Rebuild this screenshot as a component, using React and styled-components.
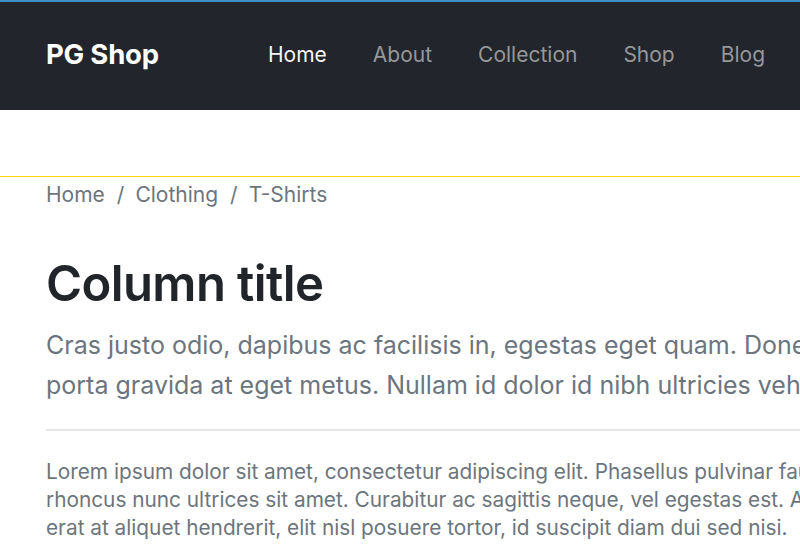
import styled, { createGlobalStyle } from 'styled-components';

const GlobalStyle = createGlobalStyle`
  * {
    box-sizing: border-box;
  }
  body {
    margin: 0;
    overflow: hidden;
    background: #ffffff;
    font-family: Inter, "Noto Sans", "Liberation Sans", sans-serif;
    -webkit-font-smoothing: antialiased;
  }
`;

const navLinks = ['Home', 'About', 'Collection', 'Shop', 'Blog'];
const crumbs = ['Home', 'Clothing', 'T-Shirts'];

const App = () => {
  return (
    <>
      <GlobalStyle />
      <Page>
        <NavBar>
          <Brand>PG Shop</Brand>
          <NavList>
            {navLinks.map((link, i) => (
              <NavLink key={link} $active={i === 0}>
                {link}
              </NavLink>
            ))}
          </NavList>
        </NavBar>
        <Main>
          <Breadcrumb>
            {crumbs.map((c, i) => (
              <Crumb key={c}>
                {i > 0 && <Divider>/</Divider>}
                {c}
              </Crumb>
            ))}
          </Breadcrumb>
          <Content>
            <Title>Column title</Title>
            <Lead>
              Cras justo odio, dapibus ac facilisis in, egestas eget quam. Donec id elit non mi
              porta gravida at eget metus. Nullam id dolor id nibh ultricies vehicula ut id elit.
            </Lead>
            <Rule />
            <Body>
              Lorem ipsum dolor sit amet, consectetur adipiscing elit. Phasellus pulvinar faucibus
              neque, nec rhoncus nunc ultrices sit amet. Curabitur ac sagittis neque, vel egestas
              est. Aenean elementum, erat at aliquet hendrerit, elit nisl posuere tortor, id
              suscipit diam dui sed nisi.
            </Body>
          </Content>
        </Main>
      </Page>
    </>
  );
};

export default App;

const Page = styled.div`
  width: 1100px;
  border-top: 2px solid #3d8fc8;
`;

const NavBar = styled.nav`
  height: 108px;
  background: #22252b;
  display: flex;
  align-items: center;
  padding: 0 46px 4px;
`;

const Brand = styled.div`
  font-size: 27.5px;
  font-weight: 700;
  color: #ffffff;
  letter-spacing: -0.2px;
  width: 222px;
`;

const NavList = styled.div`
  display: flex;
  align-items: center;
  gap: 46px;
`;

const NavLink = styled.a`
  font-size: 21px;
  font-weight: 400;
  color: ${(props) => (props.$active ? '#f4f5f6' : '#96989b')};
  cursor: pointer;
`;

const Main = styled.main`
  padding-top: 66px;
`;

const Breadcrumb = styled.div`
  border-top: 1px solid #ffd600;
  padding: 0 46px;
  display: flex;
  height: 36px;
  align-items: center;
  font-size: 21px;
  color: #6c757d;
`;

const Crumb = styled.span`
  display: flex;
  align-items: center;
`;

const Divider = styled.span`
  padding: 0 11px 0 12px;
`;

const Content = styled.section`
  width: 1058px;
  padding: 0 46px;
`;

const Title = styled.h1`
  margin: 40px 0 0;
  font-size: 49px;
  font-weight: 600;
  line-height: 64px;
  color: #212529;
  letter-spacing: -0.6px;
`;

const Lead = styled.p`
  margin: 9px 0 0;
  font-size: 25px;
  font-weight: 400;
  line-height: 40px;
  color: #6c757d;
`;

const Rule = styled.hr`
  margin: 24px 0 0;
  border: 0;
  border-top: 2px solid #e6e6e6;
`;

const Body = styled.p`
  margin: 27px 0 0;
  font-size: 20.8px;
  line-height: 28px;
  color: #6c757d;
`;
